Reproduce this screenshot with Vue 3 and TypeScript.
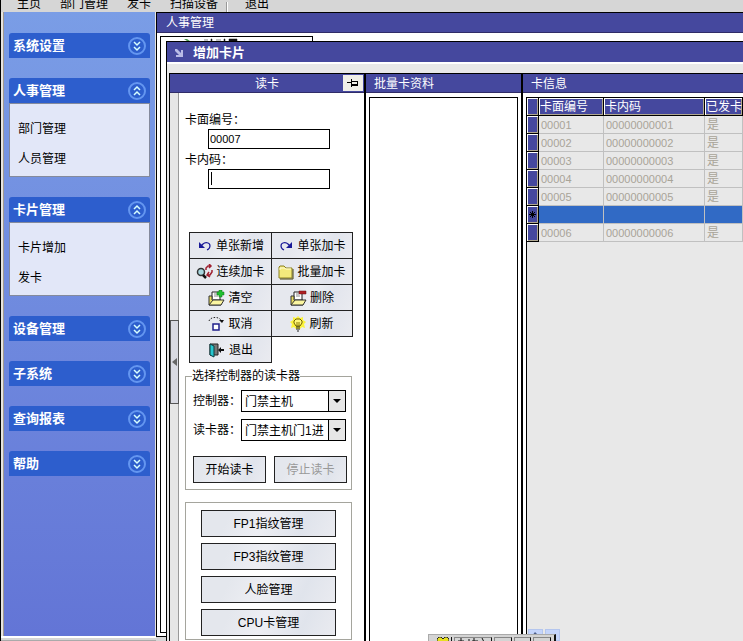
<script setup lang="ts">
import { reactive, ref } from 'vue'

interface NavGroup {
  title: string
  open: boolean
  items: string[]
}
interface CardRow {
  face: string
  code: string
  issued: string
}
interface Action {
  icon: string
  label: string
}

const menus: string[] = ['主页', '部门管理', '发卡', '扫描设备']

const groups = reactive<NavGroup[]>([
  { title: '系统设置', open: false, items: [] },
  { title: '人事管理', open: true, items: ['部门管理', '人员管理'] },
  { title: '卡片管理', open: true, items: ['卡片增加', '发卡'] },
  { title: '设备管理', open: false, items: [] },
  { title: '子系统', open: false, items: [] },
  { title: '查询报表', open: false, items: [] },
  { title: '帮助', open: false, items: [] },
])

const actions: Action[] = [
  { icon: 'undo', label: '单张新增' },
  { icon: 'redo', label: '单张加卡' },
  { icon: 'search', label: '连续加卡' },
  { icon: 'folder', label: '批量加卡' },
  { icon: 'clear', label: '清空' },
  { icon: 'remove', label: '删除' },
  { icon: 'cancel', label: '取消' },
  { icon: 'bulb', label: '刷新' },
  { icon: 'exit', label: '退出' },
]

const managers: string[] = ['FP1指纹管理', 'FP3指纹管理', '人脸管理', 'CPU卡管理']

const rows: CardRow[] = [
  { face: '00001', code: '00000000001', issued: '是' },
  { face: '00002', code: '00000000002', issued: '是' },
  { face: '00003', code: '00000000003', issued: '是' },
  { face: '00004', code: '00000000004', issued: '是' },
  { face: '00005', code: '00000000005', issued: '是' },
  { face: '', code: '', issued: '' },
  { face: '00006', code: '00000000006', issued: '是' },
]
const current = ref(5)
const face = ref('00007')
const inner = ref('')
const controller = ref('门禁主机')
const reader = ref('门禁主机门1进')
</script>

<template>
  <div class="app">
    <nav class="menubar">
      <a v-for="m in menus" :key="m" href="#" class="menu">{{ m }}</a>
      <span class="menu-sep"></span>
      <a href="#" class="menu last">退出</a>
    </nav>

    <div class="main">
      <div class="side-col">
        <aside class="sidebar">
          <section v-for="g in groups" :key="g.title" class="group">
            <button type="button" class="group-head" @click="g.open = !g.open">
              <span>{{ g.title }}</span>
              <svg class="chev" viewBox="0 0 18 18" width="18" height="18" fill="none">
                <circle cx="9" cy="9" r="8" stroke="#6496f0" stroke-width="2" />
                <path v-if="g.open" d="M6 8l3-3 3 3M6 13l3-3 3 3" stroke="#d8ffff" stroke-width="1.5" />
                <path v-else d="M6 5l3 3 3-3M6 10l3 3 3-3" stroke="#d8ffff" stroke-width="1.5" />
              </svg>
            </button>
            <div v-if="g.open" class="group-body">
              <a v-for="i in g.items" :key="i" href="#" class="group-item">{{ i }}</a>
            </div>
          </section>
        </aside>
        <div class="status"></div>
      </div>

      <div class="desktop">
        <header class="desk-title">人事管理</header>
        <div class="desk-body">
          <div class="desk-sheet"></div>
          <div class="desk-tab">
            <svg width="56" height="3" viewBox="0 0 56 3">
              <path d="M0 1h3l3 2H3z" fill="#4c9a50" />
              <path d="M20 2h4M27 1h1v2h-1zM32 2h5M40 1h1v2h-1zM45 1h8v2h-8z" fill="#111" stroke="#111" stroke-width=".5" />
            </svg>
          </div>
        </div>

        <section class="child">
          <header class="child-title">
            <svg width="8" height="8" viewBox="0 0 8 8">
              <path d="M0 0h2l4 4V1h2v7H1V6h3L0 2z" fill="#b9bbe6" />
            </svg>
            <span>增加卡片</span>
          </header>

          <div class="panels">
            <section class="panel reader">
              <header class="panel-head centred">
                <span>读卡</span>
                <button type="button" class="pin" aria-label="固定">
                  <svg width="12" height="8" viewBox="0 0 12 8" shape-rendering="crispEdges">
                    <path d="M0 3h4v1H0zM4 0h1v8H4zM5 2h6v1H5zM10 2h1v5h-1zM5 5h6v2H5z" />
                  </svg>
                </button>
              </header>
              <div class="reader-body">
                <div class="gutter">
                  <button type="button" class="grip" aria-label="收起">
                    <svg width="5" height="8" viewBox="0 0 5 8"><path d="M5 0v8L0 4z" fill="#666" /></svg>
                  </button>
                </div>
                <form class="form" @submit.prevent>
                  <div class="fields">
                    <label for="face">卡面编号：</label>
                    <input id="face" v-model="face" type="text" />
                    <label for="inner">卡内码：</label>
                    <div class="caret-box">
                      <input id="inner" v-model="inner" type="text" />
                      <i class="caret"></i>
                    </div>
                  </div>

                  <div class="actions">
                    <button v-for="a in actions" :key="a.label" type="button" class="act">
                      <svg v-if="a.icon === 'undo'" width="16" height="16" viewBox="0 0 16 16" fill="none">
                        <path d="M2 4v6h6z" fill="#1a1a98" />
                        <path d="M4 8l2-2c2-2 7-2 7 2 0 2-1 3-3 4" stroke="#1a1a98" stroke-width="1.200" />
                      </svg>
                      <svg v-else-if="a.icon === 'redo'" width="16" height="16" viewBox="0 0 16 16" fill="none">
                        <path d="M14 4v6H8z" fill="#1a1a98" />
                        <path d="M12 8l-2-2C8 4 3 4 3 8c0 2 1 3 3 4" stroke="#1a1a98" stroke-width="1.200" />
                      </svg>
                      <svg v-else-if="a.icon === 'search'" width="17" height="16" viewBox="0 0 17 16" fill="none">
                        <circle cx="5" cy="8" r="3.500" fill="#a8d8e0" stroke="#333" stroke-width="1.500" />
                        <path d="M7 11l3 3" stroke="#111" stroke-width="2.500" />
                        <path d="M10 6V4l2-2h3M13 0l2 2-2 2M16 6v2l-2 3h-3M13 8l-2 3 3 2" stroke="#a02030" stroke-width="1.500" />
                      </svg>
                      <svg v-else-if="a.icon === 'folder'" width="16" height="16" viewBox="0 0 16 16">
                        <path d="M1 3l1-1h4l2 2h6v10H1z" fill="#f4ea7c" stroke="#8a8020" />
                        <path d="M2 6V4h4l2 1h5" fill="none" stroke="#fffbd0" />
                        <path d="M15 5v10H2" fill="none" stroke="#4a4410" />
                      </svg>
                      <svg v-else-if="a.icon === 'clear' || a.icon === 'remove'" width="17" height="16" viewBox="0 0 17 16">
                        <path d="M4 9V2h8v8" fill="#fff" stroke="#222" />
                        <path d="M6 4h3M6 6h4" stroke="#888" />
                        <path d="M1 15V6h3v4h9v5z" fill="#e8dc60" stroke="#333" />
                        <path d="M1 15l4-5h11l-3 5z" fill="#fbf6a0" stroke="#333" />
                        <path v-if="a.icon === 'clear'" d="M11 0h3v2h2v3h-2v2h-3V5H9V2h2z" fill="#20c030" stroke="#117018" stroke-width=".5" />
                        <path v-else d="M9 1h7v3H9z" fill="#b02024" stroke="#600c10" stroke-width=".5" />
                      </svg>
                      <svg v-else-if="a.icon === 'cancel'" width="17" height="16" viewBox="0 0 17 16" fill="none">
                        <path d="M1 5c1-4 9-5 12-1" stroke="#222" stroke-dasharray="1.500 1.500" />
                        <path d="M11 4h5l-2 3z" fill="#111" />
                        <path d="M5 8h6v6H5z" fill="#fff" stroke="#20208c" stroke-width="1.500" />
                      </svg>
                      <svg v-else-if="a.icon === 'bulb'" width="16" height="16" viewBox="0 0 16 16">
                        <path d="M8 0l2 2 3-1v3l3 2-2 2 1 4-3-1-2 2H6l-2-2-3 1 1-4-2-2 3-2V1l3 1z" fill="#fcf43c" />
                        <path d="M6 10L4 7V5l2-2h4l2 2v2l-2 3z" fill="#fff878" stroke="#706000" />
                        <path d="M6 11h4M6 13h4M7 15h2" stroke="#222" />
                        <path d="M7 6v4M9 6v4" stroke="#887800" />
                      </svg>
                      <svg v-else width="18" height="16" viewBox="0 0 18 16">
                        <path d="M2 2h8v11H2z" fill="#777" stroke="#222" />
                        <path d="M2 2l4 2v11l-4-2z" fill="#28c8d0" stroke="#0a3c40" />
                        <path d="M16 7h-3v2h3zM13 5v6l-3-3z" fill="#111" />
                      </svg>
                      <span>{{ a.label }}</span>
                    </button>
                  </div>

                  <fieldset class="box chooser">
                    <legend>选择控制器的读卡器</legend>
                    <div class="pick">
                      <label for="ctl">控制器：</label>
                      <span class="combo">
                        <select id="ctl" v-model="controller"><option>门禁主机</option></select>
                        <span class="drop"><svg width="8" height="4" viewBox="0 0 8 4"><path d="M0 0h8L4 4z" /></svg></span>
                      </span>
                    </div>
                    <div class="pick">
                      <label for="rdr">读卡器：</label>
                      <span class="combo">
                        <select id="rdr" v-model="reader"><option>门禁主机门1进</option></select>
                        <span class="drop"><svg width="8" height="4" viewBox="0 0 8 4"><path d="M0 0h8L4 4z" /></svg></span>
                      </span>
                    </div>
                    <div class="pair">
                      <button type="button" class="btn">开始读卡</button>
                      <button type="button" class="btn" disabled>停止读卡</button>
                    </div>
                  </fieldset>

                  <div class="box managers">
                    <button v-for="m in managers" :key="m" type="button" class="btn">{{ m }}</button>
                  </div>
                </form>
              </div>
            </section>

            <section class="panel batch">
              <header class="panel-head">批量卡资料</header>
              <div class="sheet"></div>
            </section>

            <section class="panel info">
              <header class="panel-head">卡信息</header>
              <div class="grid-box">
                <table>
                  <colgroup>
                    <col class="c-mark" /><col class="c-face" /><col class="c-code" /><col class="c-issued" />
                  </colgroup>
                  <thead>
                    <tr><th></th><th>卡面编号</th><th>卡内码</th><th>已发卡</th></tr>
                  </thead>
                  <tbody>
                    <tr v-for="(r, i) in rows" :key="i" :class="{ current: i === current }" @click="current = i">
                      <th scope="row">
                        <svg v-if="i === current" class="mark" width="7" height="7" viewBox="0 0 7 7">
                          <path d="M3.500 0v7M0 3.500h7M1 1l5 5M6 1L1 6" stroke="#000" />
                        </svg>
                      </th>
                      <td>{{ r.face }}</td>
                      <td>{{ r.code }}</td>
                      <td>{{ r.issued }}</td>
                    </tr>
                  </tbody>
                </table>
              </div>
            </section>
          </div>
        </section>

        <div class="scroll-peek">
          <span class="scroll-btn"><svg width="7" height="4" viewBox="0 0 7 4"><path d="M0 4l3-4 4 4z" fill="#4a5c88" /></svg></span>
          <span class="scroll-btn"></span>
        </div>
        <div class="mini">
          <span class="mini-icon"><svg width="12" height="5" viewBox="0 0 12 5"><path d="M0 5V2l2-2h2l2 2 2-2h2l2 2v3z" fill="#e8e020" stroke="#222" /></svg></span>
          <span class="mini-cell wide"><svg width="27" height="4" viewBox="0 0 27 4"><path d="M3 0v4M0 3h6M11 1v3M16 0v4M14 3h6M24 0l2 4" fill="none" stroke="#111" /></svg></span>
          <span class="mini-cell"></span>
          <span class="mini-cell"></span>
          <span class="mini-cell"></span>
        </div>
      </div>
    </div>
  </div>
</template>

<style>
body {
  margin: 0;
  overflow: hidden;
}
</style>

<style scoped>
.app {
  display: flex;
  flex-direction: column;
  height: 100vh;
  overflow: hidden;
  font: 12px/16px "Liberation Sans", "Noto Sans CJK SC", sans-serif;
  color: #000;
  background: #d6d6d6;
}
.app *, .app *::before {
  box-sizing: border-box;
}
button, input, select {
  font: inherit;
  color: inherit;
  margin: 0;
  padding: 0;
  border-radius: 0;
}
a {
  color: inherit;
  text-decoration: none;
}
svg {
  flex: none;
  display: block;
}

.menubar {
  display: flex;
  align-items: flex-end;
  flex: none;
  height: 12px;
  padding: 0 0 0 16px;
  border-left: 1px solid #000;
}
.menu {
  margin-right: 19px;
  white-space: nowrap;
}
.menu-sep {
  width: 2px;
  height: 10px;
  margin: 0 17px 0 -11px;
  background: #999;
  border-right: 1px solid #fff;
}

.main {
  display: flex;
  flex: 1;
  min-height: 0;
}
.side-col {
  display: flex;
  flex-direction: column;
  flex: none;
  width: 156px;
  border-left: 1px solid #000;
  background: #e6e4e0;
}
.sidebar {
  flex: 1;
  min-height: 0;
  overflow: hidden;
  display: flex;
  flex-direction: column;
  gap: 20px;
  margin: 0 1px 0 2px;
  padding: 21px 5px 0;
  border-left: 1px solid #a09890;
  background: linear-gradient(#7a9de6, #6375d6);
}
.group {
  display: flex;
  flex-direction: column;
}
.group-head {
  display: flex;
  align-items: center;
  justify-content: space-between;
  height: 25px;
  padding: 0 4px;
  border: 0;
  border-radius: 3px 3px 0 0;
  background: #2d5ecd;
  color: #fff;
  font-size: 13px;
  font-weight: 700;
}
.group-body {
  display: flex;
  flex-direction: column;
  padding: 10px 8px 2px;
  border: 1px solid #848a9c;
  background: #e2e7f8;
}
.group-item {
  line-height: 30px;
}
.status {
  flex: none;
  height: 5px;
  border-top: 2px solid #fff;
  border-bottom: 1px solid #aaa;
  background: #d6d6d6;
}

.desktop {
  position: relative;
  display: flex;
  flex-direction: column;
  flex: 1;
  min-width: 0;
  border: 1px solid #000;
  border-right: 0;
  margin-bottom: 4px;
  background: #fff;
}
.desk-title {
  flex: none;
  height: 20px;
  padding: 2px 9px 0;
  color: #fff;
  background: #45489e;
  border-bottom: 1px solid #302c68;
}
.desk-body {
  flex: 1;
  display: grid;
  padding: 3px 0 3px 3px;
}
.desk-sheet, .desk-tab {
  grid-area: 1 / 1;
  border: 1px solid #000;
}
.desk-sheet {
  border-right: 0;
  border-top: 0;
}
.desk-tab {
  width: 153px;
  height: 20px;
  padding: 1px 0 0 23px;
  border-bottom: 0;
}

/* Child window floating over the desktop */
.child {
  position: absolute;
  left: 9px;
  top: 28px;
  right: 0;
  bottom: -5px;
  display: flex;
  flex-direction: column;
  border: 1px solid #000;
  border-right: 0;
  border-bottom: 0;
  background: #e8e8e8;
}
.child-title {
  display: flex;
  align-items: center;
  gap: 10px;
  flex: none;
  height: 22px;
  padding: 2px 8px 0;
  color: #fff;
  background: #45489e;
  border-bottom: 2px solid #fff;
  font-size: 13px;
  font-weight: 700;
}
.panels {
  flex: 1;
  min-height: 0;
  display: flex;
  margin: 9px 0 0 2px;
  border-top: 1px solid #000;
  border-left: 1px solid #000;
}
.panel {
  display: flex;
  flex-direction: column;
  flex: none;
  background: #fff;
  border-right: 2px solid #000;
}
.panel-head {
  display: flex;
  align-items: center;
  flex: none;
  height: 19px;
  padding: 2px 8px 0;
  color: #fff;
  background: #45489e;
  border-bottom: 1px solid #302c68;
}
.centred {
  position: relative;
  justify-content: center;
}
.pin {
  position: absolute;
  right: 1px;
  top: 1px;
  width: 20px;
  height: 16px;
  display: grid;
  place-items: center;
  border: 0;
  background: #f0efe8;
}
.reader {
  width: 196px;
}
.batch {
  width: 157px;
}
.info {
  flex: 1;
  min-width: 0;
  border-right: 0;
}
.reader-body {
  flex: 1;
  min-height: 0;
  display: flex;
}
.gutter {
  flex: none;
  width: 9px;
  padding-top: 227px;
  background: #e6e6e6;
  border-right: 1px solid #999;
}
.grip {
  display: grid;
  place-items: center;
  width: 9px;
  height: 84px;
  border: 1px solid #555;
  background: #d9dae2;
}
.form {
  flex: 1;
  min-width: 0;
  padding: 16px 12px 0 6px;
}
.fields {
  display: flex;
  flex-direction: column;
}
.fields label {
  height: 20px;
  line-height: 22px;
}
.fields input {
  display: block;
  width: 122px;
  height: 20px;
  margin-left: 23px;
  padding: 0 1px;
  border: 1px solid #000;
  outline: 0;
  background: #fff;
  font-size: 11px;
}
.caret-box {
  position: relative;
}
.caret {
  position: absolute;
  left: 26px;
  top: 3px;
  width: 1px;
  height: 13px;
  background: #000;
}
.actions {
  display: grid;
  grid-template-columns: 82px 81px;
  grid-auto-rows: 26px;
  margin: 43px 0 0 4px;
}
.act {
  display: flex;
  align-items: center;
  justify-content: center;
  gap: 3px;
  margin: 0 -1px -1px 0;
  border: 1px solid #222;
  background: linear-gradient(115deg, #e6e8ee 30%, #eceef3 50%, #e2e5ed 70%, #eaebf0);
  white-space: nowrap;
}
.box {
  width: 167px;
  margin: 0;
  border: 1px solid #a5a59d;
}
.chooser {
  display: flex;
  flex-direction: column;
  margin-top: 6px;
  padding: 6px 4px 6px 7px;
}
.chooser legend {
  padding: 0;
  margin-left: -1px;
  line-height: 16px;
}
.pick {
  display: flex;
  align-items: center;
  height: 22px;
  margin-bottom: 7px;
}
.pick label {
  width: 48px;
  white-space: nowrap;
}
.combo {
  display: grid;
  width: 105px;
}
.combo select {
  grid-area: 1 / 1;
  appearance: none;
  width: 100%;
  height: 22px;
  padding: 1px 18px 0 3px;
  border: 1px solid #000;
  background: #fff;
}
.drop {
  grid-area: 1 / 1;
  justify-self: end;
  display: grid;
  place-items: center;
  width: 17px;
  margin: 1px;
  border-left: 1px solid #000;
  background: #e6e6e6;
  pointer-events: none;
}
.pair {
  display: grid;
  grid-template-columns: 1fr 1fr;
  gap: 8px;
  margin-top: 8px;
}
.btn {
  height: 27px;
  padding-top: 1px;
  border: 1px solid #222;
  background: linear-gradient(115deg, #e4e7ed 20%, #edeef3 45%, #e0e4ec 75%, #eaebf0);
  white-space: nowrap;
}
.btn:disabled {
  color: #999;
}
.managers {
  display: flex;
  flex-direction: column;
  gap: 6px;
  margin-top: 12px;
  padding: 7px 15px 3px 15px;
}

.sheet {
  flex: 1;
  margin: 4px 3px 0 3px;
  border: 1px solid #000;
  border-bottom: 0;
}
.grid-box {
  flex: 1;
  min-height: 0;
  overflow: hidden;
  margin: 4px 0 0 3px;
  border-top: 1px solid #000;
  border-left: 1px solid #000;
  background: #e8e8e8;
}
table {
  width: 100%;
  min-width: 216px;
  table-layout: fixed;
  border-collapse: separate;
  border-spacing: 0;
}
.c-mark {
  width: 12px;
}
.c-face {
  width: 65px;
}
.c-code {
  width: 101px;
}
th, td {
  height: 18px;
  padding: 1px 2px 0;
  line-height: 16px;
  font-weight: 400;
  text-align: left;
  white-space: nowrap;
}
td {
  color: #a8a498;
  font-size: 11px;
  border-right: 1px solid #c0c0c0;
  border-bottom: 1px solid #c0c0c0;
}
td:last-child {
  font-size: 12px;
}
th {
  color: #fff;
  background: #45489e;
  border-right: 1px solid #000;
  border-bottom: 1px solid #000;
  box-shadow: inset 1px 1px 0 #fff, inset -1px -1px 0 #b0a890;
}
thead th {
  padding: 1px 1px 0;
}
tbody th {
  padding: 0;
}
.mark {
  margin: 0 auto;
}
.current td {
  background: #316ac5;
}

/* Minimised window and scroll corner lying over the bottom edge */
.scroll-peek {
  position: absolute;
  left: 371px;
  bottom: -5px;
  display: flex;
  gap: 2px;
  height: 12px;
  padding-right: 1px;
}
.scroll-btn {
  display: grid;
  place-items: start center;
  width: 15px;
  padding-top: 2px;
  border: 1px solid #b4c6ee;
  background: #c5d5fb;
}
.mini {
  position: absolute;
  left: 271px;
  bottom: -5px;
  display: flex;
  gap: 2px;
  width: 128px;
  height: 7px;
  padding: 2px 3px 0;
  border: 1px solid #aaa;
  border-right: 2px solid #111;
  border-bottom: 0;
  background: #d4d4d4;
}
.mini-icon {
  width: 20px;
  padding-left: 5px;
  border-right: 1px solid #111;
}
.mini-cell {
  flex: 1;
  border: 1px solid #888;
  border-right-color: #111;
  border-bottom: 0;
}
.wide {
  flex: none;
  width: 38px;
  padding-left: 3px;
}
</style>
